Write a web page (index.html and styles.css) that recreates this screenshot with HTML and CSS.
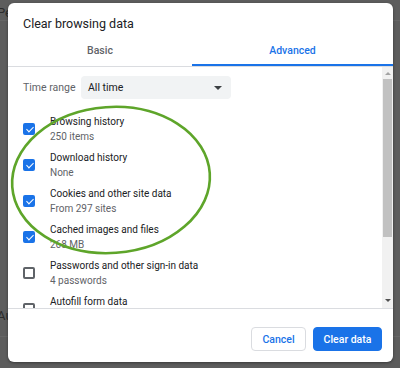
FILE: index.html
```html
<!DOCTYPE html>
<html lang="en">
<head>
    <meta charset="UTF-8">
    <meta name="viewport" content="width=device-width, initial-scale=1.0">
    <title>Clear browsing data</title>
    <link rel="stylesheet" href="styles.css">
</head>
<body>
    <!-- settings page dimmed behind the dialog -->
    <div class="page">
        <div class="page-row first">People</div>
        <div class="page-row last">Autofill</div>
    </div>

    <div class="dialog">
        <div class="dialog-title">Clear browsing data</div>

        <div class="tabs">
            <div class="tab">Basic</div>
            <div class="tab active">Advanced</div>
        </div>

        <div class="dialog-body">
            <div class="content">
                <div class="time-range">
                    <span class="time-label">Time range</span>
                    <div class="select">
                        <span>All time</span>
                        <span class="select-arrow"></span>
                    </div>
                </div>

                <div class="item">
                    <span class="checkbox checked"></span>
                    <div class="item-text">
                        <div class="item-title">Browsing history</div>
                        <div class="item-sub">250 items</div>
                    </div>
                </div>
                <div class="item">
                    <span class="checkbox checked"></span>
                    <div class="item-text">
                        <div class="item-title">Download history</div>
                        <div class="item-sub">None</div>
                    </div>
                </div>
                <div class="item">
                    <span class="checkbox checked"></span>
                    <div class="item-text">
                        <div class="item-title">Cookies and other site data</div>
                        <div class="item-sub">From 297 sites</div>
                    </div>
                </div>
                <div class="item">
                    <span class="checkbox checked"></span>
                    <div class="item-text">
                        <div class="item-title">Cached images and files</div>
                        <div class="item-sub">268 MB</div>
                    </div>
                </div>
                <div class="item">
                    <span class="checkbox"></span>
                    <div class="item-text">
                        <div class="item-title">Passwords and other sign-in data</div>
                        <div class="item-sub">4 passwords</div>
                    </div>
                </div>
                <div class="item">
                    <span class="checkbox"></span>
                    <div class="item-text">
                        <div class="item-title">Autofill form data</div>
                        <div class="item-sub">&nbsp;</div>
                    </div>
                </div>
            </div>

            <div class="scrollbar">
                <span class="scroll-up"></span>
                <div class="scroll-track">
                    <div class="scroll-thumb"></div>
                </div>
                <span class="scroll-down"></span>
            </div>
        </div>

        <div class="dialog-footer">
            <button class="btn btn-cancel">Cancel</button>
            <button class="btn btn-primary">Clear data</button>
        </div>
    </div>

    <!-- annotation circle drawn over the list -->
    <svg class="highlight" width="400" height="368" viewBox="0 0 400 368">
        <ellipse cx="111" cy="180" rx="99" ry="73" transform="rotate(-4 111 180)"
                 fill="none" stroke="#5ea52a" stroke-width="2.6"/>
    </svg>
</body>
</html>
```

FILE: styles.css
```css
* {
    margin: 0;
    padding: 0;
    box-sizing: border-box;
}

body {
    background: #5d5d5d;
    font-family: Roboto, 'Liberation Sans', Arial, sans-serif;
    height: 368px;
    overflow: hidden;
    position: relative;
}

.page {
    display: flex;
    flex-direction: column;
    height: 368px;
}

.page-row {
    font-size: 13px;
    color: #2b2b2b;
    padding-left: 0;
    border-bottom: 1px solid #666666;
}

.page-row.first {
    height: 21px;
    padding-top: 5px;
    text-indent: -3px;
}

.page-row.last {
    margin-top: 264px;
    padding-top: 23px;
    height: 52px;
    text-indent: -3px;
}

.dialog {
    position: absolute;
    left: 8px;
    top: 3px;
    width: 385px;
    height: 359px;
    background: #ffffff;
    border-radius: 6px;
    display: flex;
    flex-direction: column;
    overflow: hidden;
    box-shadow: 0 1px 3px rgba(0, 0, 0, 0.4);
}

.dialog-title {
    font-size: 12.5px;
    color: #202124;
    padding: 13px 15px 0 15px;
    height: 36px;
}

.tabs {
    display: flex;
    border-bottom: 1px solid #dadce0;
    height: 28px;
    padding-right: 0;
}

.tab {
    text-align: center;
    font-size: 10.5px;
    font-weight: 500;
    color: #5f6368;
    padding-top: 5px;
    width: 184px;
}

.tab.active {
    flex: 1;
    color: #1a73e8;
    border-bottom: 2px solid #1a73e8;
}

.dialog-body {
    flex: 1;
    display: flex;
    overflow: hidden;
    border-bottom: 1px solid #dadce0;
}

.content {
    flex: 1;
    padding: 9px 0 0 15px;
    overflow: hidden;
}

.time-range {
    display: flex;
    align-items: center;
    height: 23px;
    margin-bottom: 12px;
}

.time-label {
    font-size: 10.5px;
    color: #5f6368;
    width: 58px;
}

.select {
    width: 150px;
    height: 23px;
    background: #f1f3f4;
    border-radius: 4px;
    display: flex;
    align-items: center;
    justify-content: space-between;
    padding: 0 9px 0 7px;
    font-size: 10.5px;
    color: #202124;
}

.select-arrow {
    width: 0;
    height: 0;
    border-left: 4px solid transparent;
    border-right: 4px solid transparent;
    border-top: 4px solid #3c4043;
}

.item {
    display: flex;
    align-items: center;
    height: 36px;
}

.checkbox {
    width: 12px;
    height: 12px;
    border: 2px solid #5f6368;
    border-radius: 2px;
    margin-right: 15px;
    position: relative;
    flex-shrink: 0;
}

.checkbox.checked {
    background: #1a73e8;
    border-color: #1a73e8;
}

.checkbox.checked::after {
    content: '';
    position: absolute;
    left: 2.5px;
    top: 0px;
    width: 3px;
    height: 6px;
    border: solid #ffffff;
    border-width: 0 1.6px 1.6px 0;
    transform: rotate(45deg);
}

.item-text {
    line-height: 15px;
    font-size: 10px;
}

.item-title {
    color: #202124;
}

.item-sub {
    color: #5f6368;
}

.scrollbar {
    width: 11px;
    background: #f1f1f1;
    display: flex;
    flex-direction: column;
    align-items: center;
    padding: 3px 0 4px;
}

.scroll-up,
.scroll-down {
    width: 0;
    height: 0;
    border-left: 3.5px solid transparent;
    border-right: 3.5px solid transparent;
    margin: 2px 0;
}

.scroll-up {
    border-bottom: 3.5px solid #a3a3a3;
}

.scroll-down {
    border-top: 3.5px solid #505050;
}

.scroll-track {
    flex: 1;
    width: 100%;
    padding: 2px 1px;
}

.scroll-thumb {
    height: 158px;
    background: #c1c1c1;
}

.dialog-footer {
    display: flex;
    justify-content: flex-end;
    gap: 7px;
    padding: 18px 11px 0 0;
    height: 53px;
}

.btn {
    height: 24px;
    border-radius: 4px;
    font-family: Roboto, 'Liberation Sans', Arial, sans-serif;
    font-size: 10.5px;
    font-weight: 500;
    cursor: pointer;
}

.btn-cancel {
    width: 55px;
    background: #ffffff;
    border: 1px solid #dadce0;
    color: #1a73e8;
}

.btn-primary {
    width: 69px;
    background: #1a73e8;
    border: 1px solid #1a73e8;
    color: #ffffff;
}

.highlight {
    position: absolute;
    left: 0;
    top: 0;
    pointer-events: none;
}
```
